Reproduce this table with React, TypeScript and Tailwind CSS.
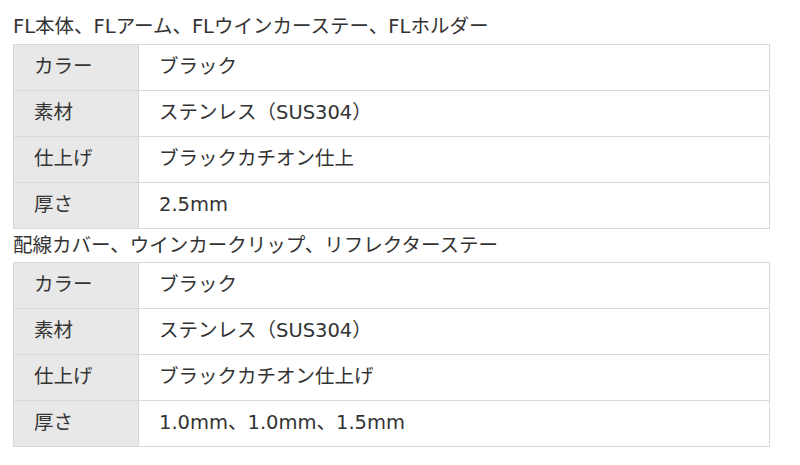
import React from "react";

const t1 = [
  ["カラー", "ブラック"],
  ["素材", "ステンレス（SUS304）"],
  ["仕上げ", "ブラックカチオン仕上"],
  ["厚さ", "2.5mm"],
];
const t2 = [
  ["カラー", "ブラック"],
  ["素材", "ステンレス（SUS304）"],
  ["仕上げ", "ブラックカチオン仕上げ"],
  ["厚さ", "1.0mm、1.0mm、1.5mm"],
];

function Table({ rows }: { rows: string[][] }) {
  return (
    <table className="w-[757px] border-collapse border border-[#d8d8d8]">
      <tbody>
        {rows.map(([k, v]) => (
          <tr key={k} className="h-[46px]">
            <th className="w-[125px] border border-[#d8d8d8] bg-[#e8e8e8] pl-[20px] pb-[2px] text-left font-normal align-middle">
              {k}
            </th>
            <td className="border border-[#d8d8d8] bg-white pl-[20px] pb-[2px] align-middle">{v}</td>
          </tr>
        ))}
      </tbody>
    </table>
  );
}

export default function App() {
  return (
    <div
      className="w-[800px] h-[465px] bg-white pl-[13px] pt-[9px] text-[19.5px] leading-[1.3] text-[#333]"
      style={{ fontFamily: '"DejaVu Sans", "Noto Sans CJK JP", sans-serif' }}
    >
      <div className="h-[35px] flex items-center">FL本体、FLアーム、FLウインカーステー、FLホルダー</div>
      <Table rows={t1} />
      <div className="h-[33px] flex items-center">配線カバー、ウインカークリップ、リフレクターステー</div>
      <Table rows={t2} />
    </div>
  );
}
